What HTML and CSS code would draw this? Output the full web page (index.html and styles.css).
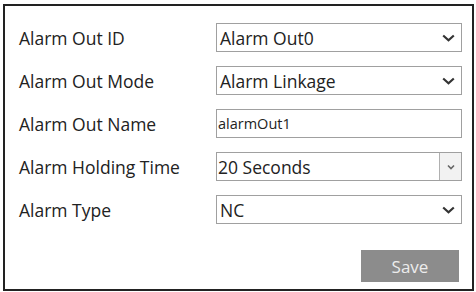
FILE: index.html
```html
<!DOCTYPE html>
<html>
<head>
<meta charset="utf-8">
<link rel="stylesheet" href="styles.css">
</head>
<body>
<div class="panel">
  <div class="row">
    <div class="label">Alarm Out ID</div>
    <div class="field">
      <span class="value">Alarm Out0</span>
      <svg class="chev" width="13" height="8" viewBox="0 0 13 8"><path d="M1.2 1.5 L6.5 6.2 L11.8 1.5" fill="none" stroke="#333" stroke-width="2.2"/></svg>
    </div>
  </div>
  <div class="row">
    <div class="label">Alarm Out Mode</div>
    <div class="field">
      <span class="value">Alarm Linkage</span>
      <svg class="chev" width="13" height="8" viewBox="0 0 13 8"><path d="M1.2 1.5 L6.5 6.2 L11.8 1.5" fill="none" stroke="#333" stroke-width="2.2"/></svg>
    </div>
  </div>
  <div class="row">
    <div class="label">Alarm Out Name</div>
    <div class="field text">
      <span class="value">alarmOut1</span>
    </div>
  </div>
  <div class="row">
    <div class="label">Alarm Holding Time</div>
    <div class="field combo">
      <span class="value">20 Seconds</span>
      <span class="dropbtn"><svg width="8" height="6" viewBox="0 0 8 6"><path d="M1 1.5 L4 4.5 L7 1.5" fill="none" stroke="#666" stroke-width="1.6"/></svg></span>
    </div>
  </div>
  <div class="row">
    <div class="label">Alarm Type</div>
    <div class="field">
      <span class="value">NC</span>
      <svg class="chev" width="13" height="8" viewBox="0 0 13 8"><path d="M1.2 1.5 L6.5 6.2 L11.8 1.5" fill="none" stroke="#333" stroke-width="2.2"/></svg>
    </div>
  </div>
  <div class="actions">
    <button class="save">Save</button>
  </div>
</div>
</body>
</html>
```
FILE: styles.css
```css
html, body {
  margin: 0;
  padding: 0;
  background: #ffffff;
}
body {
  font-family: "Open Sans", "Noto Sans", sans-serif;
  color: #222;
}
.panel {
  box-sizing: border-box;
  margin: 4px 0 0 3px;
  width: 471px;
  height: 287px;
  border: 2px solid #222;
  padding: 17px 10px 0 14px;
  display: flex;
  flex-direction: column;
  gap: 14px;
}
.row {
  display: flex;
  align-items: center;
  height: 29px;
}
.label {
  width: 197px;
  font-size: 17.5px;
  color: #222;
}
.field {
  box-sizing: border-box;
  width: 246px;
  height: 29px;
  border: 1.5px solid #a0a0a0;
  display: flex;
  align-items: center;
  justify-content: space-between;
  padding: 0 6px 0 3px;
  font-size: 17.5px;
  color: #222;
}
.field.text {
  font-size: 14.5px;
  padding-left: 1px;
}
.field.combo {
  padding-right: 0;
  padding-left: 1px;
}
.dropbtn {
  box-sizing: border-box;
  width: 22px;
  height: 100%;
  border-left: 1.5px solid #b0b0b0;
  background: #f2f2f2;
  display: flex;
  align-items: center;
  justify-content: center;
}
.chev {
  display: block;
}
.actions {
  display: flex;
  justify-content: flex-end;
  padding-right: 3px;
  margin-top: 12px;
}
.save {
  width: 98px;
  height: 32px;
  border: none;
  background: #8c8c8c;
  color: #ececec;
  font-family: "Open Sans", "Noto Sans", sans-serif;
  font-size: 17px;
  padding: 0;
}
```
